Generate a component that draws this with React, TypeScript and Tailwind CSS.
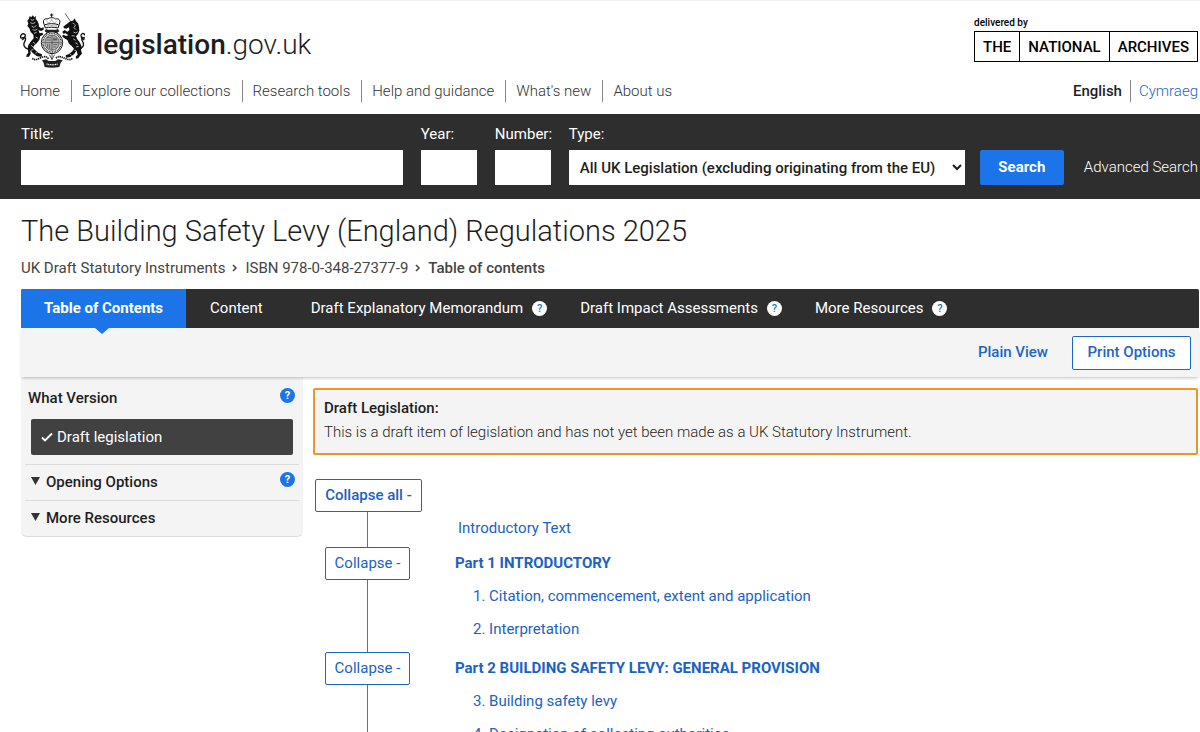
import type { ReactNode } from "react";

const navLinks = [
  "Home",
  "Explore our collections",
  "Research tools",
  "Help and guidance",
  "What's new",
  "About us",
];

const tabs = [
  { label: "Table of Contents", active: true, help: false },
  { label: "Content", active: false, help: false },
  { label: "Draft Explanatory Memorandum", active: false, help: true },
  { label: "Draft Impact Assessments", active: false, help: true },
  { label: "More Resources", active: false, help: true },
];

const parts = [
  {
    title: "Part 1 INTRODUCTORY",
    items: ["1. Citation, commencement, extent and application", "2. Interpretation"],
  },
  {
    title: "Part 2 BUILDING SAFETY LEVY: GENERAL PROVISION",
    items: ["3. Building safety levy", "4. Designation of collecting authorities"],
  },
];

function Crest() {
  return (
    <svg viewBox="33 25 195 165" className="h-[55px] w-[65px] shrink-0" aria-hidden="true">
      {/* lion */}
      <path
        fill="#111"
        d="M62 34l5 4 4-6 5 6 5-4-1 9 5 5 4 9 1 9 7 5 6-3 2 6-8 5-9-2 4 9 8-2 3 6-9 4-3 11-7 10-8 7-4 7 7 8 10 8 10 4-1 7-14-1-12-9-8-9 1 10-5 9-8 1 1-7 5-6-2-13 2-10 8-11 8-9-1-11-8-8-4-11-6-7 3-7-3-9 5-6z"
      />
      <path
        fill="none"
        stroke="#111"
        strokeWidth="4"
        d="M61 134c-14-2-20-12-14-23 6-10 1-15-5-12s-9 0-6-7 13-6 13 1-5 9-10 13"
      />
      {/* unicorn */}
      <path fill="none" stroke="#111" strokeWidth="2" d="M168 26l17 25" />
      <path
        fill="#111"
        d="M184 50l8-2 5-7 4 9 6 6 3 10 1 12-4 10-6 7 4 9 8 10 5 12-2 11 3 10-6 6-5 8-8 1 1-7 5-5-3-12-8 11-11 8-13 2-1-7 10-4 10-8 5-8-7-8-8-7-5-11-9-5-7-6 4-5 8 4 7-2-8-6-7 1-3-6 7-5 8 5 6-4-1-9-8 4-7-1-2-5 7-6z"
      />
      <path
        fill="none"
        stroke="#111"
        strokeWidth="4"
        d="M207 134c14-2 20-12 14-23-6-10-1-15 3-12s8-1 4-8-12-5-12 2 5 9 10 13"
      />
      {/* mane, chain and limb highlights */}
      <g fill="none" stroke="#fff" strokeWidth="2">
        <path d="M65 44l5 3 6-3M64 54l7 3 8-4M68 64l6 4 8-5M71 75l7 2 7-4M75 86l8-3M80 97l7 4M72 112l7 6M66 122l8 6M66 137l7-3M79 146l6-3" />
        <path d="M191 55l6 4M200 60l-5 9 6 6M193 82l7 3 6-4M188 93l9 1M193 103l7 4M199 114l8 5M201 127l8-2M196 136l7 4M183 148l5 4" />
      </g>
      {/* crown */}
      <path
        fill="#fff"
        stroke="#111"
        strokeWidth="3"
        d="M109 70l-5-15c-3-9 4-15 13-12 3-3 7-4 11-4s8 1 11 4c9-3 16 3 13 12l-5 15c-12-3-26-3-38 0z"
      />
      <path fill="none" stroke="#111" strokeWidth="3" d="M128 26v13M123 31h10M108 60c12-4 28-4 40 0" />
      <path
        fill="none"
        stroke="#111"
        strokeWidth="2"
        strokeDasharray="2 2"
        d="M112 48l8 8 8-11 8 11 8-8M110 65c12-3 24-3 36 0"
      />
      {/* helm and garter */}
      <path fill="#222" d="M111 73l6 2h24l6-2 4 7-8 6h-28l-8-6z" />
      <ellipse cx="129" cy="114" rx="32" ry="33" fill="#fff" stroke="#111" strokeWidth="3" />
      <ellipse cx="129" cy="114" rx="27" ry="28" fill="none" stroke="#222" strokeWidth="4" strokeDasharray="3 2" />
      <ellipse cx="129" cy="114" rx="22" ry="23" fill="#b5b5b5" stroke="#222" strokeWidth="2" />
      <path
        fill="none"
        stroke="#333"
        strokeWidth="2"
        d="M129 91v45M108 114h42M114 99h12M112 106h14M135 97v13M141 99v11M132 104h13M116 118v11M122 118v15M133 120h12M133 127h9"
      />
      {/* compartment and motto scroll */}
      <path
        fill="none"
        stroke="#111"
        strokeWidth="5"
        strokeDasharray="4 2"
        d="M70 161c10 9 20-1 31-4 9-3 14 1 17 5M190 161c-10 9-22-1-33-4-9-3-14 1-17 5"
      />
      <path fill="#222" d="M99 167l12-3 8 5h20l8-5 14 3-6 8-4 12c-14 3-30 3-44 0l-3-12z" />
      <path fill="none" stroke="#fff" strokeWidth="4" strokeDasharray="3 2" d="M113 178c10 3 24 3 34 0" />
      <path fill="none" stroke="#111" strokeWidth="2" d="M121 150l8 14 8-14M129 147v18" />
    </svg>
  );
}

function Chevron() {
  return (
    <svg viewBox="0 0 6 8" className="mt-[7px] h-2 w-[6px]" aria-hidden="true">
      <path d="M1 1l3 3-3 3" fill="none" stroke="#444" strokeWidth="1.500" />
    </svg>
  );
}

function HelpIcon({ inverted = false }: { inverted?: boolean }) {
  return (
    <span
      className={
        inverted
          ? "flex size-[15px] items-center justify-center rounded-full bg-white text-[11px] leading-none font-medium text-[#1d70e8]"
          : "flex size-[15px] items-center justify-center rounded-full bg-[#1b75e8] text-[11px] leading-none font-bold text-white"
      }
    >
      ?
    </span>
  );
}

function Field({ id, label, className, children }: { id: string; label: string; className: string; children?: ReactNode }) {
  return (
    <div className={className}>
      <label htmlFor={id} className="block h-[26px] text-[15px] leading-5 text-white">
        {label}
      </label>
      {children ?? <input id={id} type="text" className="block h-[35px] w-full bg-white px-2 text-[#111]" />}
    </div>
  );
}

function Header() {
  return (
    <header className="border-t border-[#f1f1f1] pr-[2px] pl-5">
      <div className="flex h-[75px] items-start justify-between">
        <a href="#home" className="flex items-center gap-[11px] pt-3">
          <Crest />
          <span className="pt-2 text-[28px] leading-9 font-light text-[#1e1e1e]">
            <strong className="font-medium">legislation</strong>.gov.uk
          </span>
        </a>
        <a href="#archives" className="pt-[14px] text-black">
          <span className="block text-[10px] leading-4 font-medium">delivered by</span>
          <span className="flex h-[31px] divide-x divide-black border border-black text-[15px] leading-[30px] font-medium">
            <span className="px-2">THE</span>
            <span className="px-2">NATIONAL</span>
            <span className="px-2">ARCHIVES</span>
          </span>
        </a>
      </div>
      <div className="flex h-[38px] items-start justify-between pt-1 text-[15px] leading-[22px]">
        <nav aria-label="Main">
          <ul className="flex divide-x divide-[#888]">
            {navLinks.map((link) => (
              <li key={link} className="pr-[11px] pl-[10px] first:pl-0">
                <a href="#nav" className="font-light text-[#333]">
                  {link}
                </a>
              </li>
            ))}
          </ul>
        </nav>
        <div className="flex divide-x divide-[#888]">
          <span className="pr-2 font-medium text-[#1e1e1e]">English</span>
          <a href="#cy" className="pl-2 font-light text-[#1b66c9]">
            Cymraeg
          </a>
        </div>
      </div>
    </header>
  );
}

function SearchBar() {
  return (
    <form className="flex h-[85px] bg-[#2e2e2e] pt-[10px] pr-[2px] pl-[21px]">
      <Field id="title" label="Title:" className="mr-[18px] flex-1" />
      <Field id="year" label="Year:" className="mr-[18px] w-14" />
      <Field id="number" label="Number:" className="mr-[18px] w-14" />
      <Field id="type" label="Type:" className="mr-[15px] w-[396px]">
        <select
          id="type"
          className="block h-[35px] w-full bg-white pl-[7px] text-[15px] font-medium text-[#1e1e1e]"
        >
          <option>All UK Legislation (excluding originating from the EU)</option>
        </select>
      </Field>
      <button
        type="submit"
        className="mt-[26px] mr-5 h-[35px] w-[84px] rounded-xs bg-[#1b75e8] text-[15px] font-bold text-white"
      >
        Search
      </button>
      <a href="#advanced" className="mt-[26px] text-[15px] leading-[35px] font-light text-white">
        Advanced Search
      </a>
    </form>
  );
}

function Sidebar() {
  return (
    <aside className="w-[282px] shrink-0 self-start rounded-b-md border-b border-[#ddd] bg-[#f4f4f4] px-1 pt-[11px] text-[15px] font-medium text-[#1e1e1e]">
      <div className="flex items-start justify-between pr-1 pl-[3px]">
        <h2 className="leading-5">What Version</h2>
        <HelpIcon />
      </div>
      <div className="mx-[6px] mt-[11px] mb-[9px] flex h-9 items-center rounded-xs bg-[#414141] pl-[10px] font-normal text-white">
        <svg viewBox="0 0 12 12" className="mr-1 size-3" aria-hidden="true">
          <path d="M1 6.500l3 3 7-7" fill="none" stroke="#fff" strokeWidth="1.800" />
        </svg>
        Draft legislation
      </div>
      {["Opening Options", "More Resources"].map((label, i) => (
        <div key={label} className="flex h-9 items-start justify-between border-t border-[#ddd] pt-[7px] pr-1 pl-[6px]">
          <h2 className="flex items-start leading-5">
            <svg viewBox="0 0 9 8" className="mt-[5px] mr-[6px] h-2 w-[9px]" aria-hidden="true">
              <path d="M0 0h9L4.500 8z" fill="#333" />
            </svg>
            {label}
          </h2>
          {i === 0 && <HelpIcon />}
        </div>
      ))}
    </aside>
  );
}

function Contents() {
  return (
    <div className="relative mt-6 ml-[2px] text-[15px] text-[#1b62c4]">
      {/* line that joins the collapse buttons */}
      <span className="absolute inset-y-0 left-[52px] w-px bg-[#2f7de0]" />
      <button
        type="button"
        className="relative block h-[33px] w-[107px] rounded-xs border border-[#1b66c9] bg-white font-medium"
      >
        Collapse all -
      </button>
      <a href="#intro" className="ml-[143px] block h-[35px] leading-8">
        Introductory Text
      </a>
      {parts.map((part) => (
        <section key={part.title} className="pb-[6px]">
          <div className="flex h-[33px] items-center pl-[10px]">
            <button
              type="button"
              className="relative mr-[45px] h-[33px] w-[85px] rounded-xs border border-[#1b66c9] bg-white"
            >
              Collapse -
            </button>
            <a href="#part" className="font-bold">
              {part.title}
            </a>
          </div>
          <ul className="pl-[158px]">
            {part.items.map((item) => (
              <li key={item} className="h-[33px] leading-[33px]">
                <a href="#item">{item}</a>
              </li>
            ))}
          </ul>
        </section>
      ))}
    </div>
  );
}

export default function App() {
  return (
    <div className="h-screen overflow-hidden bg-white font-[Roboto,sans-serif]">
      <Header />
      <SearchBar />
      <main className="pr-px pl-[21px]">
        <h1 className="pt-3 text-[29px] leading-10 font-light text-[#1e1e1e]">
          The Building Safety Levy (England) Regulations 2025
        </h1>
        <nav aria-label="Breadcrumb" className="flex h-[38px] items-start gap-[7px] pt-[6px] text-[15px] leading-[22px] text-[#444]">
          <a href="#drafts">UK Draft Statutory Instruments</a>
          <Chevron />
          <a href="#isbn">ISBN 978-0-348-27377-9</a>
          <Chevron />
          <span className="font-medium">Table of contents</span>
        </nav>

        <ul className="relative z-20 flex h-[39px] rounded-t-xs bg-[#2e2e2e] text-[15px] text-white">
          {tabs.map((tab) => (
            <li key={tab.label} className="relative">
              <a
                href="#tab"
                className={
                  tab.active
                    ? "flex h-full items-center rounded-tl-xs bg-[#1b75e8] px-[23px] font-bold"
                    : tab.help
                      ? "flex h-full items-center gap-[9px] pr-[9px] pl-6"
                      : "flex h-full items-center px-6"
                }
              >
                {tab.label}
                {tab.help && <HelpIcon inverted />}
              </a>
              {tab.active && (
                <svg viewBox="0 0 14 6" className="absolute top-full left-[74px] h-[6px] w-[14px]" aria-hidden="true">
                  <path d="M0 0h14L7 6z" fill="#1b75e8" />
                </svg>
              )}
            </li>
          ))}
        </ul>
        <div className="relative z-10 flex h-[49px] items-center justify-end gap-6 bg-[#f4f4f4] pr-2 text-[15px] font-medium text-[#1b66c9] shadow-[0_2px_3px_-1px_rgba(0,0,0,0.25)]">
          <a href="#plain">Plain View</a>
          <button type="button" className="h-[34px] w-[119px] rounded-xs border border-[#1b66c9] bg-white">
            Print Options
          </button>
        </div>

        <div className="flex">
          <Sidebar />
          <div className="min-w-0 flex-1 pt-[11px] pr-px pl-[10px]">
            <div className="h-[67px] rounded-xs border-2 border-[#e8962e] bg-[#f4f4f4] px-[9px] pt-[6px] text-[15px] leading-6 text-[#1e1e1e]">
              <h2 className="font-medium">Draft Legislation:</h2>
              <p className="font-light">
                This is a draft item of legislation and has not yet been made as a UK Statutory Instrument.
              </p>
            </div>
            <Contents />
          </div>
        </div>
      </main>
    </div>
  );
}
